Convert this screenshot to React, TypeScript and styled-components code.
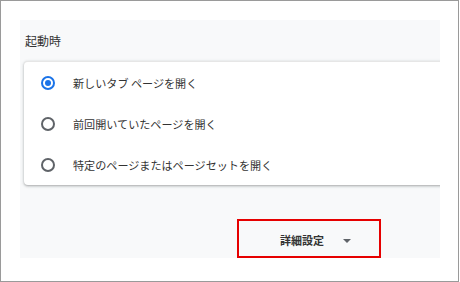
import React from "react";
import styled, { createGlobalStyle } from "styled-components";

const Global = createGlobalStyle`
  html, body { margin: 0; padding: 0; background: #ffffff; }
  body { font-family: "Noto Sans CJK JP", "Noto Sans", sans-serif; }
`;

const Frame = styled.div`
  box-sizing: border-box;
  width: 459px;
  height: 282px;
  border: 1px solid #9a9a9a;
  padding: 19px 0 0 19px;
  background: #ffffff;
`;

const Panel = styled.section`
  width: 420px;
  height: 238px;
  background: #f8f9fa;
  overflow: hidden;
  position: relative;
  display: flex;
  flex-direction: column;
`;

const Title = styled.h2`
  margin: 0;
  height: 41px;
  display: flex;
  align-items: center;
  padding-left: 5px;
  font-size: 12px;
  font-weight: 400;
  color: #333333;
`;

const Card = styled.div`
  margin-left: 4px;
  width: 440px;
  height: 123px;
  flex: none;
  background: #ffffff;
  border-top: 1px solid #e6e6e6;
  border-radius: 4px 0 0 4px;
  box-shadow: 0 1px 2px rgba(60, 64, 67, 0.3), 0 1px 3px 1px rgba(60, 64, 67, 0.12);
  display: flex;
  flex-direction: column;
`;

const Row = styled.label`
  height: 41px;
  display: flex;
  align-items: center;
  padding-left: 17px;
  gap: 18px;
  font-size: 11.1px;
  color: #333333;
  cursor: pointer;
`;

const Radio = styled.span<{ $checked?: boolean }>`
  box-sizing: border-box;
  width: 14px;
  height: 14px;
  border-radius: 50%;
  border: 2px solid ${(p) => (p.$checked ? "#1a73e8" : "#5f6368")};
  display: flex;
  align-items: center;
  justify-content: center;
  flex: none;
  &::after {
    content: "";
    width: 6px;
    height: 6px;
    border-radius: 50%;
    background: ${(p) => (p.$checked ? "#1a73e8" : "transparent")};
  }
`;

const Footer = styled.div`
  flex: 1;
  display: flex;
  align-items: flex-end;
  padding-left: 217px;
`;

const AdvancedButton = styled.button`
  box-sizing: border-box;
  width: 144px;
  height: 39px;
  border: 2px solid #e60000;
  background: transparent;
  display: flex;
  align-items: center;
  padding: 3px 0 0 41px;
  gap: 19px;
  font-family: inherit;
  font-size: 11px;
  font-weight: 700;
  color: #333333;
  cursor: pointer;
`;

const Caret = styled.span`
  width: 0;
  height: 0;
  border-left: 4px solid transparent;
  border-right: 4px solid transparent;
  border-top: 4px solid #5f6368;
  margin-top: 1px;
`;

const options = [
  { label: "新しいタブ ページを開く", checked: true },
  { label: "前回開いていたページを開く", checked: false },
  { label: "特定のページまたはページセットを開く", checked: false },
];

export default function App() {
  return (
    <>
      <Global />
      <Frame>
        <Panel>
          <Title>起動時</Title>
          <Card>
            {options.map((o) => (
              <Row key={o.label}>
                <Radio $checked={o.checked} />
                <span>{o.label}</span>
              </Row>
            ))}
          </Card>
          <Footer>
            <AdvancedButton>
              <span>詳細設定</span>
              <Caret />
            </AdvancedButton>
          </Footer>
        </Panel>
      </Frame>
    </>
  );
}
